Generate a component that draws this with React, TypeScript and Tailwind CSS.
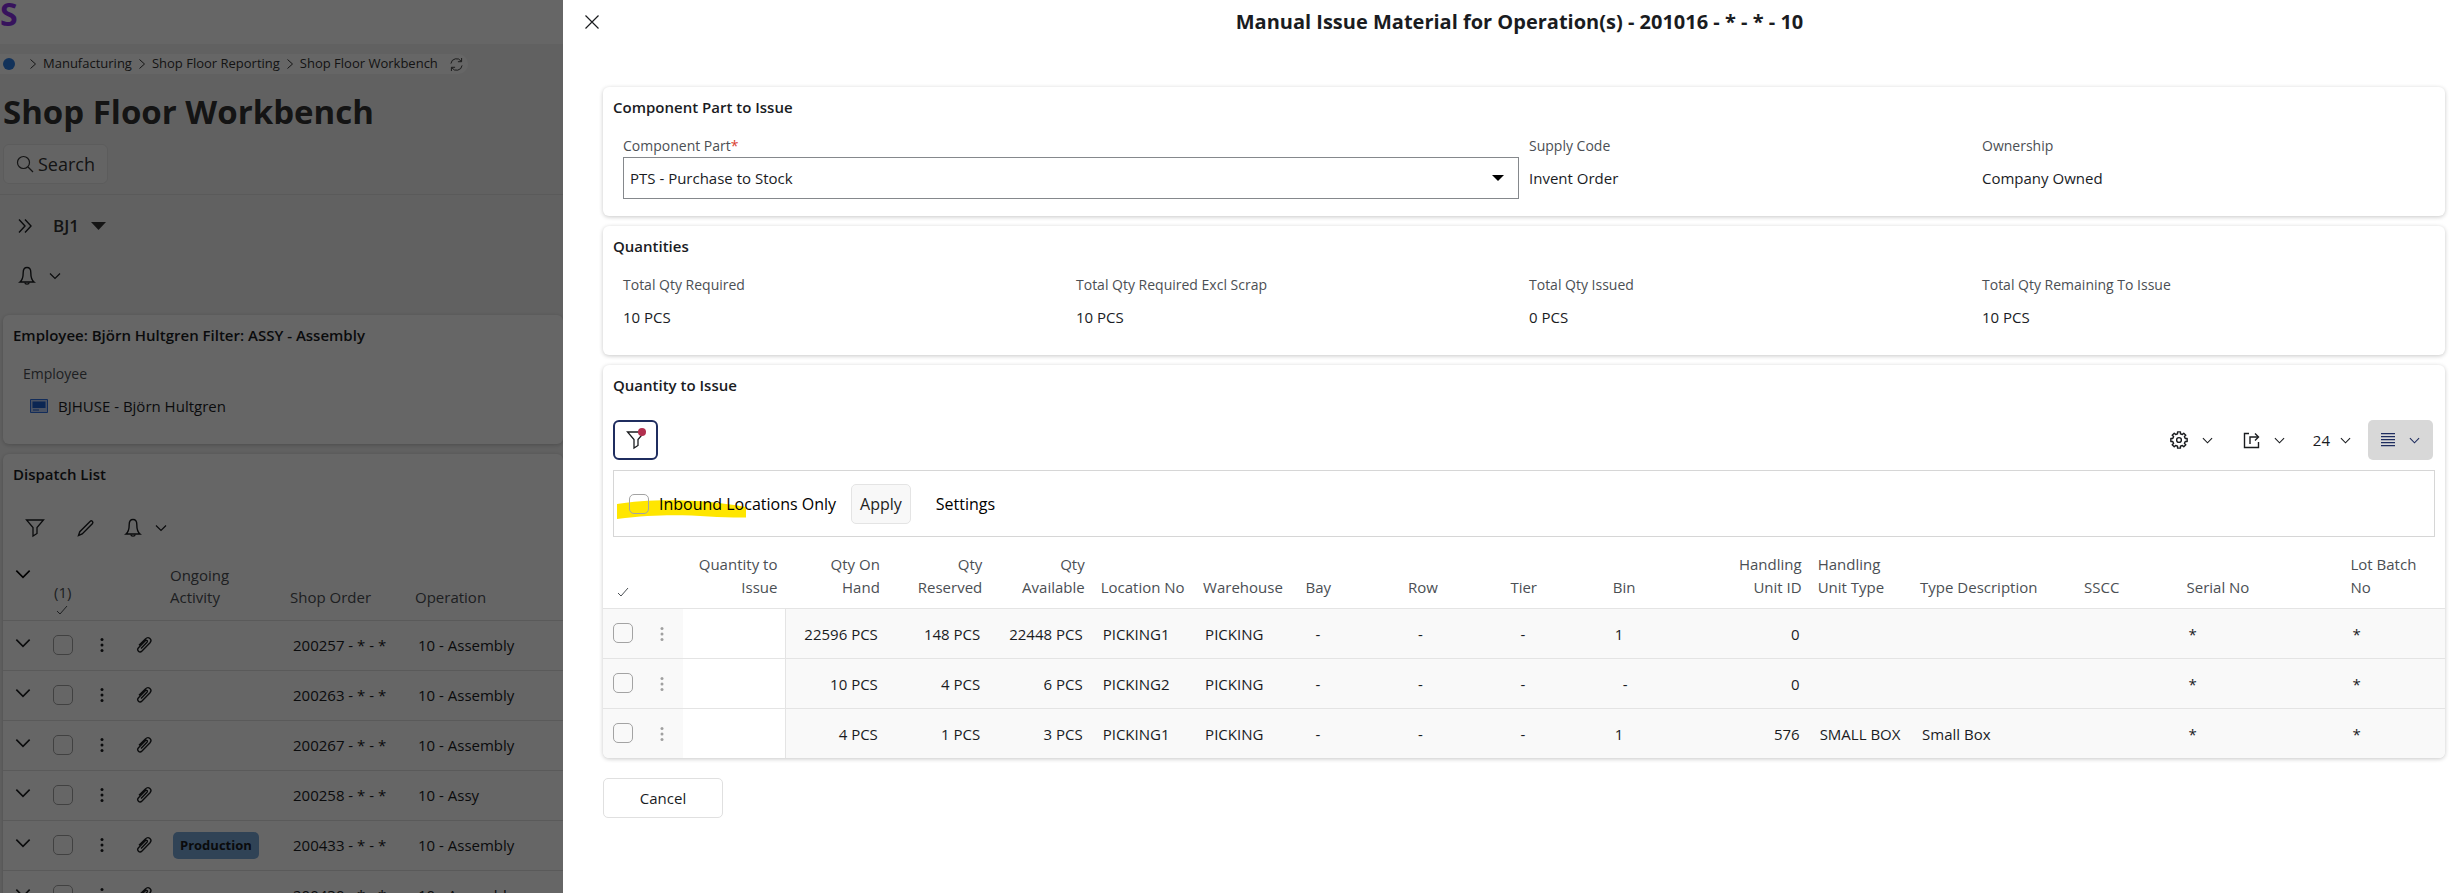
import type { ReactNode } from 'react'

type IconProps = { className?: string }

function Svg({ className, box = 24, children }: IconProps & { box?: number; children: ReactNode }) {
  return (
    <svg
      className={className}
      viewBox={`0 0 ${box} ${box}`}
      fill="none"
      stroke="currentColor"
      strokeWidth="1.4"
      aria-hidden="true"
    >
      {children}
    </svg>
  )
}

const ChevronDown = ({ className = 'h-3 w-3' }: IconProps) => (
  <Svg className={className} box={12}>
    <path d="M1 3.5l5 5 5-5" strokeWidth="1.2" />
  </Svg>
)

const ChevronRight = () => (
  <Svg className="h-3 w-3" box={12}>
    <path d="M3.5 1.5L8.5 6l-5 4.5" strokeWidth="1" />
  </Svg>
)

const Funnel = () => (
  <Svg className="h-5 w-5" box={20}>
    <path d="M1.5 2h17L12 9.5v6L8 18V9.5z" strokeWidth="1.3" />
  </Svg>
)

const Bell = () => (
  <Svg className="h-5 w-5" box={20}>
    <path d="M10 1.5c-2.7 0-3.8 1.9-3.8 5C6.2 11.5 5.5 14 3 16h14c-2.5-2-3.2-4.5-3.2-9.500 0-3.100-1.100-5-3.800-5z" />
    <path d="M7.8 16.5c.3 2.2 4.1 2.2 4.4 0" />
  </Svg>
)

const Pencil = () => (
  <Svg className="h-[18px] w-[18px]" box={18}>
    <path d="M1.5 16.5l1.3-3.8L13.3 2.3c1.200-1.200 3.400.6 2.200 2.200L5.200 15z" />
  </Svg>
)

const Clip = () => (
  <Svg className="h-[18px] w-[18px]" box={18}>
    <path d="M6 12.5l6-6.2c1.2-1.3-.5-2.8-1.7-1.6L3.5 11.7c-2.3 2.6 1 5.8 3.5 3.4l8-8.3c2.7-3.2-1.5-7-4.6-3.9L4 9.2" />
  </Svg>
)

const Check = () => (
  <Svg className="h-3 w-3" box={12}>
    <path d="M1 7l3 3 7-8" strokeWidth="1" />
  </Svg>
)

const Caret = ({ className }: IconProps) => (
  <svg className={className} viewBox="0 0 12 8" preserveAspectRatio="none" fill="currentColor" aria-hidden="true">
    <path d="M0 0h12L6 8z" />
  </svg>
)

const Dots = () => (
  <svg className="h-4 w-1" viewBox="0 0 4 16" fill="currentColor" aria-hidden="true">
    <circle cx="2" cy="2.5" r="1.5" />
    <circle cx="2" cy="8" r="1.5" />
    <circle cx="2" cy="13.5" r="1.5" />
  </svg>
)

// Eight teeth, each with four corners given as [angle offset, radius]
const gearPoints = Array.from({ length: 8 })
  .flatMap((_, i) =>
    [
      [-13, 6.4],
      [-10, 8.3],
      [10, 8.3],
      [13, 6.4],
    ].map(([offset, r]) => {
      const a = ((i * 45 + offset) * Math.PI) / 180
      return `${(9 + r * Math.cos(a)).toFixed(2)},${(9 + r * Math.sin(a)).toFixed(2)}`
    })
  )
  .join(' ')

const Gear = () => (
  <Svg className="h-[18px] w-[18px]" box={18}>
    <polygon points={gearPoints} strokeLinejoin="round" />
    <circle cx="9" cy="9" r="2.4" />
  </Svg>
)

const Export = () => (
  <Svg className="h-[17px] w-[17px]" box={17}>
    <path d="M6 1.5H1.5v14h14V10" />
    <path d="M7 12V5h8" />
    <path d="M12 1.5L15.5 5 12 8.5" />
  </Svg>
)

const Rows = () => (
  <Svg className="h-[14px] w-[14px]" box={14}>
    <path d="M0 .7h14M0 3.7h14M0 6.7h14M0 9.7h14M0 12.7h14" strokeWidth="1.3" />
  </Svg>
)

const Checkbox = ({ label, id }: { label?: string; id?: string }) => (
  <input
    type="checkbox"
    id={id}
    aria-label={label}
    className="block h-5 w-5 shrink-0 appearance-none rounded-[5px] border border-[#a3a3a3]"
  />
)

const dispatchRows = [
  { order: '200257 - * - *', operation: '10 - Assembly' },
  { order: '200263 - * - *', operation: '10 - Assembly' },
  { order: '200267 - * - *', operation: '10 - Assembly' },
  { order: '200258 - * - *', operation: '10 - Assy' },
  { order: '200433 - * - *', operation: '10 - Assembly', activity: 'Production' },
  { order: '200430 - * - *', operation: '10 - Assembly' },
]

const columns = [
  { title: 'Quantity to Issue', right: true },
  { title: 'Qty On Hand', right: true },
  { title: 'Qty Reserved', right: true },
  { title: 'Qty Available', right: true },
  { title: 'Location No' },
  { title: 'Warehouse' },
  { title: 'Bay' },
  { title: 'Row' },
  { title: 'Tier' },
  { title: 'Bin' },
  { title: 'Handling Unit ID', right: true },
  { title: 'Handling Unit Type' },
  { title: 'Type Description', wide: true },
  { title: 'SSCC' },
  { title: 'Serial No', wide: true },
  { title: 'Lot Batch No' },
]

const stock = [
  ['', '22596 PCS', '148 PCS', '22448 PCS', 'PICKING1', 'PICKING', '-', '-', '-', '1', '0', '', '', '', '*', '*'],
  ['', '10 PCS', '4 PCS', '6 PCS', 'PICKING2', 'PICKING', '-', '-', '-', '-', '0', '', '', '', '*', '*'],
  ['', '4 PCS', '1 PCS', '3 PCS', 'PICKING1', 'PICKING', '-', '-', '-', '1', '576', 'SMALL BOX', 'Small Box', '', '*', '*'],
]

const card = 'rounded-md bg-white shadow-[0_1px_4px_rgba(0,0,0,0.22)]'

function Field({ label, value }: { label: string; value: string }) {
  return (
    <div>
      <p className="text-sm leading-[22px] text-[#4b4f54]">{label}</p>
      <p className="text-[15px] leading-[42px]">{value}</p>
    </div>
  )
}

function Workbench() {
  return (
    <div className="relative w-[563px] shrink-0 overflow-hidden bg-[#f3f3f3]">
      <header className="h-11 bg-white">
        <a href="#" className="block text-[32px] leading-7 font-bold text-[#8b30e8]" aria-label="Home">
          S
        </a>
      </header>

      <nav className="mt-2.5 flex h-5 w-[468px] items-center rounded-r-full bg-white pl-[3px] text-[13px] whitespace-nowrap text-[#333]">
        <span className="h-3 w-3 shrink-0 rounded-full bg-[#2f7de0]" />
        <ol className="ml-3 flex items-center">
          {['Manufacturing', 'Shop Floor Reporting', 'Shop Floor Workbench'].map((crumb) => (
            <li key={crumb} className="flex items-center gap-1 pr-1">
              <ChevronRight />
              <a href="#">{crumb}</a>
            </li>
          ))}
        </ol>
        <button type="button" aria-label="Refresh" className="ml-2">
          <Svg className="h-[13px] w-[13px]" box={14}>
            <path d="M1 6a6 6 0 0 1 11-2.5M13 8a6 6 0 0 1-11 2.5M12.5 0v4h-4M1.5 14v-4h4" strokeWidth="1" />
          </Svg>
        </button>
      </nav>

      <h1 className="mt-[11px] pl-[3px] text-[33px] leading-[54px] font-bold text-[#333]">Shop Floor Workbench</h1>

      <div className="border-b border-[#e2e2e2] pb-2.5 pl-[3px]">
        <button
          type="button"
          className="mt-[5px] flex h-10 items-center gap-1 rounded-md border border-[#e6e6e6] bg-[#fbfbfb] px-3 text-lg text-[#333]"
        >
          <Svg className="h-[18px] w-[18px]" box={18}>
            <circle cx="7.5" cy="7.5" r="6" strokeWidth="1.2" />
            <path d="M12 12l5 5" strokeWidth="1.2" />
          </Svg>
          Search
        </button>
      </div>

      <div className="flex h-[61px] items-center pl-[17px]">
        <button type="button" aria-label="Expand">
          <Svg className="h-4 w-4" box={16}>
            <path d="M2 1.5L8 8l-6 6.5M8 1.5L14 8l-6 6.5" />
          </Svg>
        </button>
        <button type="button" className="ml-5 flex items-center gap-3 text-[17px] font-semibold text-[#333]">
          BJ1
          <Caret className="h-2 w-[15px]" />
        </button>
      </div>
      <button type="button" aria-label="Notifications" className="flex h-10 items-center gap-3 pl-[17px]">
        <Bell />
        <ChevronDown />
      </button>

      <section className={`mt-[19px] ml-[3px] h-[129px] px-2.5 pt-2 ${card}`}>
        <h2 className="text-[15px] leading-6 font-semibold">Employee: Björn Hultgren Filter: ASSY - Assembly</h2>
        <div className="mt-4 pl-2.5">
          <p className="text-sm leading-[22px] text-[#4b4f54]">Employee</p>
          <p className="flex items-center gap-2.5 pl-[7px] text-[15px] leading-[42px]">
            <svg className="h-3.5 w-[18px]" viewBox="0 0 18 14" aria-hidden="true">
              <path d="M.5.5h17v13H.5z" fill="#b9cdf5" stroke="#2f6fe0" strokeWidth="1" />
              <path d="M2.5 2.5h13v6.500h-13zM3 10.500h6v1H3z" fill="#1d5fd0" />
            </svg>
            BJHUSE - Björn Hultgren
          </p>
        </div>
      </section>

      <section className={`mt-2.5 ml-[3px] pt-2 ${card}`}>
        <h2 className="px-2.5 text-[15px] leading-6 font-semibold">Dispatch List</h2>
        <div className="mt-[22px] flex h-10 items-center pl-[22px]">
          <button type="button" aria-label="Filter">
            <Funnel />
          </button>
          <button type="button" aria-label="Edit" className="ml-8">
            <Pencil />
          </button>
          <button type="button" aria-label="Notifications" className="ml-7 flex items-center gap-3">
            <Bell />
            <ChevronDown />
          </button>
        </div>
        <table className="mt-2 w-full table-fixed text-left text-[15px]">
          <colgroup>
            <col className="w-[37px]" />
            <col className="w-[43px]" />
            <col className="w-[38px]" />
            <col className="w-[42px]" />
            <col className="w-[120px]" />
            <col className="w-[125px]" />
            <col />
          </colgroup>
          <thead>
            <tr className="h-[64px] align-bottom leading-[22px] text-[#4b4f54]">
              <th className="pb-[38px] pl-3 text-black">
                <ChevronDown className="h-4 w-4" />
              </th>
              <th className="pb-1 pl-3.5 font-normal">
                <span className="block leading-6">(1)</span>
                <span className="block pl-0.5">
                  <Check />
                </span>
              </th>
              <th />
              <th />
              <th className="pr-8 pb-3 pl-[7px] font-normal">Ongoing Activity</th>
              <th className="pb-3 pl-[7px] font-normal">Shop Order</th>
              <th className="pb-3 pl-[7px] font-normal">Operation</th>
            </tr>
          </thead>
          <tbody>
            {dispatchRows.map((row) => (
              <tr key={row.order} className="h-[50px] border-t border-[#e0e0e0]">
                <td className="pb-1 pl-3">
                  <ChevronDown className="h-4 w-4" />
                </td>
                <td className="pl-[13px]">
                  <Checkbox label={`Select ${row.order}`} />
                </td>
                <td className="pl-[17px]">
                  <Dots />
                </td>
                <td className="pl-3.5">
                  <Clip />
                </td>
                <td className="pl-2.5">
                  {row.activity && (
                    <span className="inline-block rounded-[5px] bg-[#78a8d8] px-[7px] text-[13px] leading-[27px] font-bold">
                      {row.activity}
                    </span>
                  )}
                </td>
                <td className="pl-2.5">{row.order}</td>
                <td className="pl-2.5">{row.operation}</td>
              </tr>
            ))}
          </tbody>
        </table>
      </section>

      {/* Modal backdrop */}
      <div className="absolute inset-0 bg-black/60" />
    </div>
  )
}

function Toolbar() {
  return (
    <div className="flex h-10 items-center pr-3 pl-2.5">
      <button
        type="button"
        aria-label="Filter"
        className="relative flex h-10 w-[45px] items-center justify-center rounded-md border-2 border-[#1f2d5f]"
      >
        <Funnel />
        <span className="absolute top-1.5 right-2.5 h-2 w-2 rounded-full bg-[#b3304f]" />
      </button>
      <div className="ml-auto flex items-center">
        <button type="button" aria-label="Settings" className="flex items-center gap-3.5">
          <Gear />
          <ChevronDown className="h-[11px] w-[11px]" />
        </button>
        <button type="button" aria-label="Export" className="ml-[30px] flex items-center gap-3.5">
          <Export />
          <ChevronDown className="h-[11px] w-[11px]" />
        </button>
        <button type="button" aria-label="Page size" className="ml-7 flex items-center gap-2.5 text-[15px]">
          24
          <ChevronDown className="h-[11px] w-[11px]" />
        </button>
        <button
          type="button"
          aria-label="Row height"
          className="ml-[17px] flex h-10 w-[65px] items-center justify-center gap-3.5 rounded-[5px] bg-[#d8d8d8] text-[#1f2d5f]"
        >
          <Rows />
          <ChevronDown className="h-[11px] w-[11px]" />
        </button>
      </div>
    </div>
  )
}

function StockTable() {
  return (
    <table className="mt-2.5 w-full table-fixed text-left text-[15px]">
      <colgroup>
        <col className="w-10" />
        <col className="w-10" />
        {columns.map((col) => (
          <col key={col.title} className={col.wide ? 'w-[164px]' : ''} />
        ))}
      </colgroup>
      <thead>
        <tr className="h-[61px] align-bottom leading-[23px] text-[#4b4f54]">
          <th className="pb-2.5 pl-3.5">
            <Check />
          </th>
          <th />
          {columns.map((col) => (
            <th key={col.title} className={`px-2 pb-[9px] font-normal ${col.right ? 'text-right' : ''}`}>
              {col.title}
            </th>
          ))}
        </tr>
      </thead>
      <tbody>
        {stock.map((cells, r) => (
          <tr key={r} className="h-[50px] border-t border-[#e4e4e4] bg-[#f9f9f9]">
            <td className="pl-2.5">
              <Checkbox label={`Select row ${r + 1}`} />
            </td>
            <td className="pt-0.5 pl-[17px] text-[#a0a0a0]">
              <Dots />
            </td>
            {cells.map((cell, c) => (
              <td
                key={c}
                className={
                  c === 0
                    ? 'border-r border-[#e4e4e4] bg-white'
                    : columns[c].right
                      ? 'pt-0.5 pr-2.5 text-right'
                      : cell === '-'
                        ? 'pt-0.5 pl-[18px]'
                        : 'pt-0.5 pl-2.5 whitespace-nowrap'
                }
              >
                {cell}
              </td>
            ))}
          </tr>
        ))}
      </tbody>
    </table>
  )
}

function IssueDrawer() {
  return (
    <main className="flex-1 bg-white">
      <header className="flex h-[43px] items-center pl-[22px]">
        <button type="button" aria-label="Close">
          <Svg className="h-3.5 w-3.5" box={14}>
            <path d="M.5.5l13 13M13.5.5l-13 13" strokeWidth="1.2" />
          </Svg>
        </button>
        <h1 className="flex-1 pr-5 text-center text-xl font-bold">
          Manual Issue Material for Operation(s) - 201016 - * - * - 10
        </h1>
      </header>

      <div className="mt-11 flex flex-col gap-2.5 pr-[15px] pl-10">
        <section className={`h-[129px] px-2.5 pt-2 ${card}`}>
          <h2 className="text-[15px] leading-6 font-semibold">Component Part to Issue</h2>
          <div className="mt-4 grid grid-cols-4 gap-x-2.5 px-2.5">
            <div className="col-span-2">
              <label htmlFor="part" className="block text-sm leading-[22px] text-[#4b4f54]">
                Component Part<span className="text-[#d9402f]">*</span>
              </label>
              <div className="relative">
                <select
                  id="part"
                  className="h-[42px] w-full appearance-none border border-[#85888c] bg-white px-1.5 text-[15px]"
                >
                  <option>PTS - Purchase to Stock</option>
                </select>
                <Caret className="pointer-events-none absolute top-[18px] right-[15px] h-1.5 w-3 text-black" />
              </div>
            </div>
            <Field label="Supply Code" value="Invent Order" />
            <Field label="Ownership" value="Company Owned" />
          </div>
        </section>

        <section className={`h-[129px] px-2.5 pt-2 ${card}`}>
          <h2 className="text-[15px] leading-6 font-semibold">Quantities</h2>
          <div className="mt-4 grid grid-cols-4 gap-x-2.5 px-2.5">
            <Field label="Total Qty Required" value="10 PCS" />
            <Field label="Total Qty Required Excl Scrap" value="10 PCS" />
            <Field label="Total Qty Issued" value="0 PCS" />
            <Field label="Total Qty Remaining To Issue" value="10 PCS" />
          </div>
        </section>

        <section className={`overflow-hidden pt-2 ${card}`}>
          <h2 className="px-2.5 text-[15px] leading-6 font-semibold">Quantity to Issue</h2>
          <div className="mt-[23px]">
            <Toolbar />
          </div>
          <div className="relative mx-2.5 mt-2.5 flex h-[67px] items-center border border-[#d6d6d6] pl-[15px] text-base text-black">
            {/* Marker stroke */}
            <svg className="absolute top-7 left-[3px] h-5 w-[129px]" viewBox="0 0 129 20" aria-hidden="true">
              <path d="M0 5C30 0 80-1 129 8v10.5C90 19 60 12 0 20z" fill="#ffe600" />
            </svg>
            <div className="relative flex items-center gap-2.5">
              <Checkbox id="inbound" />
              <label htmlFor="inbound">Inbound Locations Only</label>
            </div>
            <button
              type="button"
              className="ml-[15px] h-10 rounded-[5px] border border-[#e4e4e4] bg-[#f8f8f8] px-2 text-[#222]"
            >
              Apply
            </button>
            <button type="button" className="ml-[25px]">
              Settings
            </button>
          </div>
          <StockTable />
        </section>

        <button
          type="button"
          className="mt-2.5 h-10 w-[120px] rounded-[5px] border border-[#e0e0e0] bg-white text-[15px]"
        >
          Cancel
        </button>
      </div>
    </main>
  )
}

export default function App() {
  return (
    <div className="flex h-screen overflow-hidden font-['Open_Sans',sans-serif] text-[#1a1c1f]">
      <Workbench />
      <IssueDrawer />
    </div>
  )
}
